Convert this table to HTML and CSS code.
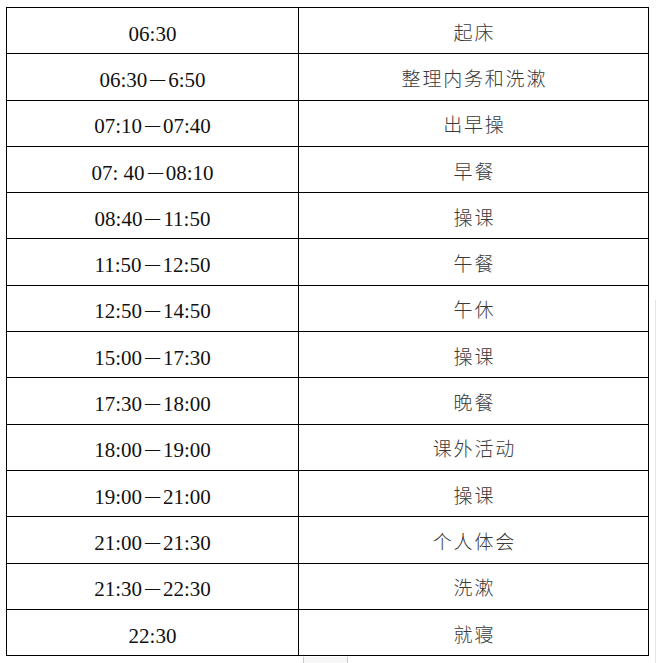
FILE: index.html
```html
<!DOCTYPE html>
<html lang="zh-CN">
<head>
<meta charset="utf-8">
<title>作息时间表</title>
<link rel="stylesheet" href="styles.css">
</head>
<body>
<table class="schedule">
  <colgroup><col class="c-time"><col class="c-act"></colgroup>
  <tbody>
    <tr><td class="time">06:30</td><td class="act">起床</td></tr>
    <tr><td class="time">06:30<span class="dash">—</span>6:50</td><td class="act">整理内务和洗漱</td></tr>
    <tr><td class="time">07:10<span class="dash">—</span>07:40</td><td class="act">出早操</td></tr>
    <tr><td class="time">07: 40<span class="dash">—</span>08:10</td><td class="act">早餐</td></tr>
    <tr><td class="time">08:40<span class="dash">—</span>11:50</td><td class="act">操课</td></tr>
    <tr><td class="time">11:50<span class="dash">—</span>12:50</td><td class="act">午餐</td></tr>
    <tr><td class="time">12:50<span class="dash">—</span>14:50</td><td class="act">午休</td></tr>
    <tr><td class="time">15:00<span class="dash">—</span>17:30</td><td class="act">操课</td></tr>
    <tr><td class="time">17:30<span class="dash">—</span>18:00</td><td class="act">晚餐</td></tr>
    <tr><td class="time">18:00<span class="dash">—</span>19:00</td><td class="act">课外活动</td></tr>
    <tr><td class="time">19:00<span class="dash">—</span>21:00</td><td class="act">操课</td></tr>
    <tr><td class="time">21:00<span class="dash">—</span>21:30</td><td class="act">个人体会</td></tr>
    <tr><td class="time">21:30<span class="dash">—</span>22:30</td><td class="act">洗漱</td></tr>
    <tr><td class="time">22:30</td><td class="act">就寝</td></tr>
  </tbody>
</table>
<div class="edge-line"></div>
<div class="foot-box"></div>
</body>
</html>
```

FILE: styles.css
```css
html, body {
  margin: 0;
  background: #ffffff;
}
body {
  position: relative;
  width: 656px;
  height: 663px;
  overflow: hidden;
  padding: 7px 0 0 6px;
  box-sizing: border-box;
}
.schedule {
  border-collapse: collapse;
  width: 642px;
  table-layout: fixed;
}
.c-time { width: 292px; }
.c-act { width: 350px; }
.schedule td {
  border: 1px solid #000;
  padding: 0;
  text-align: center;
  vertical-align: middle;
}
.schedule td.time {
  font-family: "Liberation Serif", "Times New Roman", serif;
  font-size: 21px;
  color: #111;
  padding-top: 6px;
  height: 39.3px;
  line-height: 24px;
}
.dash {
  display: inline-block;
  transform: scaleX(0.72) translateY(-1px);
}
.schedule td.act {
  font-family: "Noto Sans CJK SC", "Noto Sans CJK JP", sans-serif;
  font-size: 19px;
  letter-spacing: 1.8px;
  text-indent: 1.8px;
  color: #3a3a3a;
  font-weight: 300;
  padding-top: 2px;
  height: 43.3px;
  line-height: 24px;
}
.edge-line {
  position: absolute;
  right: 0;
  top: 300px;
  width: 1px;
  height: 363px;
  background: #e4e4e4;
}
.foot-box {
  position: absolute;
  left: 303px;
  top: 657px;
  width: 43px;
  height: 10px;
  border-left: 1px solid #c8c8c8;
  border-right: 1px solid #c8c8c8;
  background: #f7f7f7;
}
```
